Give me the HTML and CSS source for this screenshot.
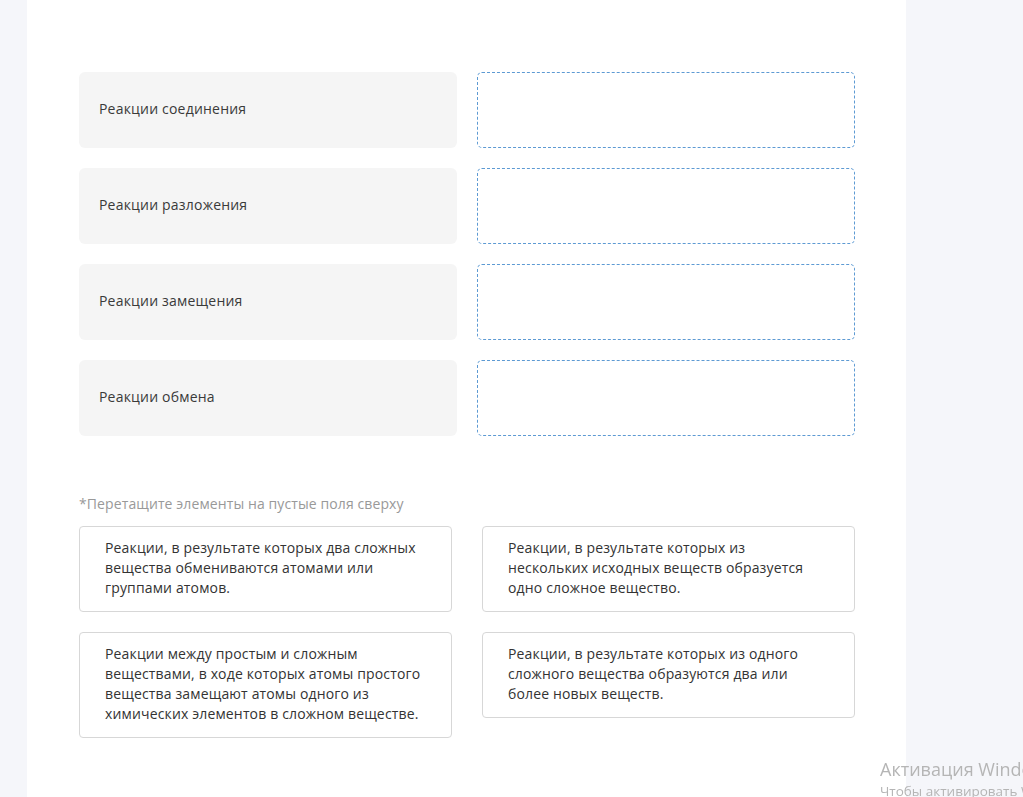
FILE: index.html
```html
<!DOCTYPE html>
<html lang="ru">
<head>
<meta charset="utf-8">
<link rel="stylesheet" href="styles.css">
</head>
<body>
<div class="page">
  <main class="panel">
    <section class="pairs">
      <div class="label">Реакции соединения</div>
      <div class="drop"></div>
      <div class="label">Реакции разложения</div>
      <div class="drop"></div>
      <div class="label">Реакции замещения</div>
      <div class="drop"></div>
      <div class="label">Реакции обмена</div>
      <div class="drop"></div>
    </section>
    <p class="hint">*Перетащите элементы на пустые поля сверху</p>
    <section class="cards">
      <div class="card">Реакции, в результате которых два сложных вещества обмениваются атомами или группами атомов.</div>
      <div class="card">Реакции, в результате которых из нескольких исходных веществ образуется одно сложное вещество.</div>
      <div class="card">Реакции между простым и сложным веществами, в ходе которых атомы простого вещества замещают атомы одного из химических элементов в сложном веществе.</div>
      <div class="card">Реакции, в результате которых из одного сложного вещества образуются два или более новых веществ.</div>
    </section>
  </main>
</div>
<div class="watermark">
  <div class="wm-title">Активация Windows</div>
  <div class="wm-sub">Чтобы активировать Windows</div>
</div>
</body>
</html>
```
FILE: styles.css
```css
html, body {
  margin: 0;
  padding: 0;
  height: 100%;
  overflow: hidden;
}
body {
  background: #f5f6fa;
  font-family: "Open Sans", "Liberation Sans", sans-serif;
  color: #333;
}
.page {
  padding-left: 27px;
  height: 100%;
}
.panel {
  background: #fff;
  width: 879px;
  height: 100%;
  box-sizing: border-box;
  padding: 72px 51px 0 52px;
}
.pairs {
  display: grid;
  grid-template-columns: 378px 378px;
  column-gap: 20px;
  row-gap: 20px;
}
.label {
  height: 76px;
  box-sizing: border-box;
  background: #f5f5f5;
  border-radius: 6px;
  display: flex;
  align-items: center;
  padding: 0 0 3px 20px;
  font-size: 14px;
  letter-spacing: 0.2px;
  color: #3a3a3a;
}
.drop {
  height: 76px;
  box-sizing: border-box;
  border: 1px dashed #5d9ad3;
  border-radius: 5px;
}
.hint {
  margin: 58px 0 0;
  font-size: 14px;
  line-height: 20px;
  letter-spacing: 0.1px;
  color: #999;
}
.cards {
  margin-top: 12px;
  display: grid;
  grid-template-columns: 373px 373px;
  column-gap: 30px;
  row-gap: 20px;
  align-items: start;
}
.card {
  border: 1px solid #d7d7d7;
  border-radius: 4px;
  padding: 11px 28px 13px 25px;
  font-size: 14px;
  line-height: 20px;
  letter-spacing: 0.15px;
  color: #333;
}
.watermark {
  position: fixed;
  left: 880px;
  top: 757px;
  white-space: nowrap;
  color: #b5b5b5;
  font-family: "Open Sans", "Liberation Sans", sans-serif;
}
.wm-title {
  font-size: 18px;
  line-height: 25px;
}
.wm-sub {
  font-size: 13.5px;
  line-height: 18px;
}
```
